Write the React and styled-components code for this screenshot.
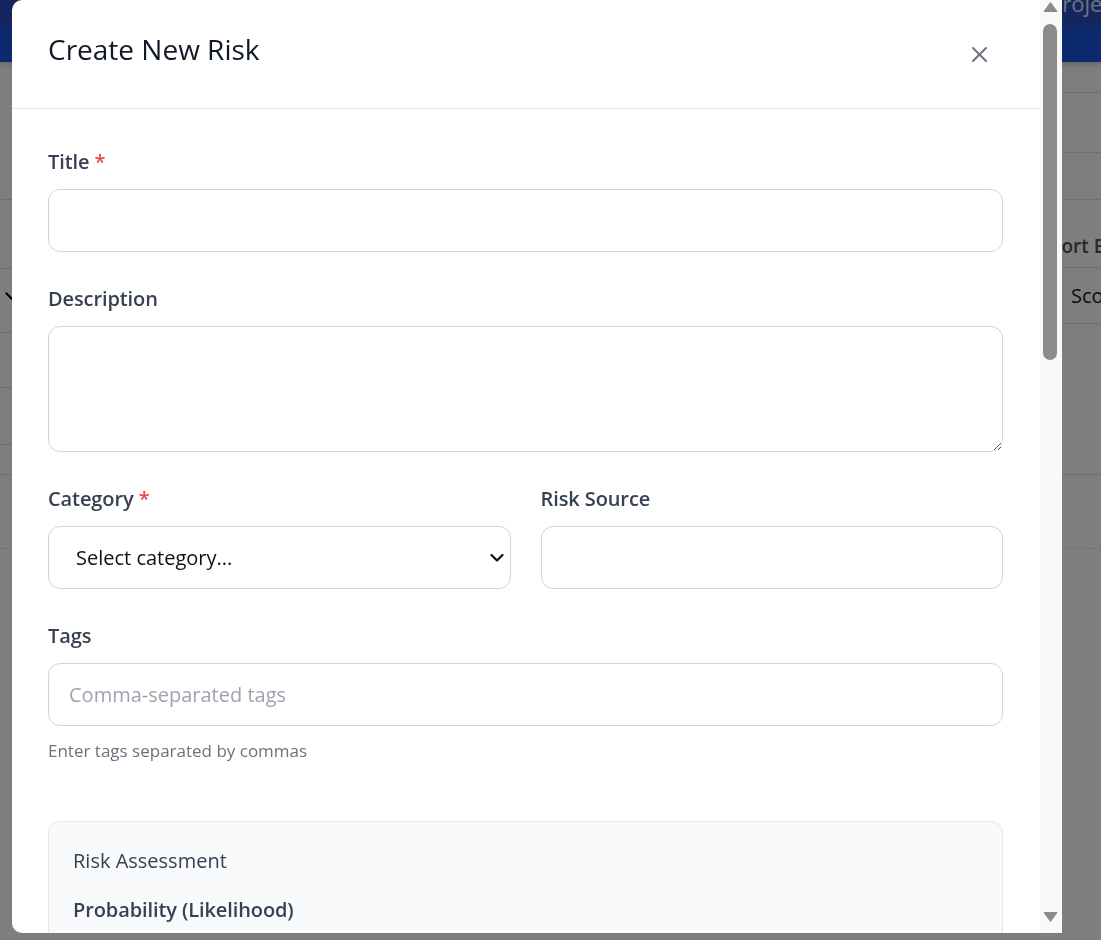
import React from "react";
import styled, { createGlobalStyle, css } from "styled-components";

const GlobalStyle = createGlobalStyle`
    html, body {
        margin: 0;
        padding: 0;
        height: 100%;
        overflow: hidden;
    }

    body {
        font-family: "Open Sans", "Noto Sans", sans-serif;
        background: #fcfcfc;
    }

    * {
        box-sizing: border-box;
    }
`;

/* ---------- dimmed page behind the dialog ---------- */

const Page = styled.div`
    height: 100vh;
    background: #fcfcfc;
`;

const NavBar = styled.nav`
    position: relative;
    z-index: 1;
    box-shadow: 0 2px 6px rgba(0, 0, 0, 0.22);
`;

const NavTop = styled.div`
    display: grid;
    grid-template-columns: 1049px 1fr;
    height: 28px;
    overflow: hidden;
    background: #264cbe;
`;

const NavLink = styled.span`
    margin-top: -8px;
    font-size: 22px;
    line-height: 22px;
    color: rgba(255, 255, 255, 0.88);
    white-space: nowrap;
`;

const NavBottom = styled.div`
    height: 34px;
    background: #1c55dc;
`;

const BgGrid = styled.div`
    display: grid;
    grid-template-columns: 1048px 1fr;
`;

const BgColumn = styled.div`
    display: flex;
    flex-direction: column;
    overflow: hidden;
`;

const BgRow = styled.div`
    display: flex;
    align-items: ${(p) => p.$align || "center"};
    height: ${(p) => p.$h}px;
    padding: ${(p) => p.$pad || "0"};
    border-bottom: 1px ${(p) => (p.$dashed ? "dashed" : "solid")} #dcdcdc;
    white-space: nowrap;
`;

const SortLabel = styled.span`
    font-size: 19px;
    font-weight: 600;
    line-height: 30px;
    color: #4b5563;
`;

const SortValue = styled.span`
    font-size: 20px;
    line-height: 30px;
    color: #111827;
`;

/* ---------- dialog ---------- */

const Overlay = styled.div`
    position: fixed;
    inset: 0;
    z-index: 10;
    display: flex;
    align-items: flex-start;
    padding-left: 12px;
    background: rgba(0, 0, 0, 0.5);
`;

const Dialog = styled.div`
    display: flex;
    width: 1050px;
    height: 933px;
    overflow: hidden;
    background: #ffffff;
    border-radius: 10px 0 0 10px;
`;

const DialogContent = styled.div`
    flex: 1;
    min-width: 0;
    overflow: hidden;
`;

const ScrollRail = styled.div`
    display: flex;
    flex-direction: column;
    width: 22px;
    flex-shrink: 0;
    background: #f9f9f9;
`;

const RailArrow = styled.svg`
    display: block;
    flex-shrink: 0;
`;

const RailTrack = styled.div`
    flex: 1;
`;

const RailThumb = styled.div`
    height: 336px;
    margin: 2px 5px 0 3px;
    border-radius: 7px;
    background: #8b8b8b;
`;

const Header = styled.header`
    display: flex;
    justify-content: space-between;
    align-items: flex-start;
    height: 109px;
    padding: 29px 36px 0;
    border-bottom: 1px solid #e5e7eb;
`;

const Title = styled.h2`
    margin: 0;
    font-size: 28px;
    font-weight: 400;
    line-height: 40px;
    color: #111827;
`;

const CloseButton = styled.button`
    display: flex;
    align-items: center;
    justify-content: center;
    width: 34px;
    height: 34px;
    margin: 8px 8px 0 0;
    padding: 0;
    border: none;
    background: transparent;
    cursor: pointer;
`;

const Body = styled.form`
    padding: 36px 37px 40px 36px;
`;

const Field = styled.div`
    margin-bottom: ${(p) => (p.$mb !== undefined ? p.$mb : 30)}px;
`;

const Row = styled.div`
    display: grid;
    grid-template-columns: 1fr 1fr;
    gap: 30px;
`;

const Label = styled.label`
    display: block;
    margin-bottom: 10px;
    font-size: 20px;
    font-weight: 600;
    line-height: 34px;
    color: #374151;
    letter-spacing: -0.1px;
`;

const Required = styled.span`
    color: #ef4444;
`;

const control = css`
    display: block;
    width: 100%;
    font-family: inherit;
    font-size: 20px;
    color: #111111;
    background: #ffffff;
    border: 1px solid #d1d5db;
    border-radius: 12px;
    outline: none;

    &::placeholder {
        color: #9ca3af;
    }
`;

const Input = styled.input`
    ${control};
    height: 63px;
    padding: 0 20px;
`;

const TextArea = styled.textarea`
    ${control};
    height: 126px;
    padding: 14px 20px;
    resize: vertical;
`;

const SelectWrap = styled.div`
    position: relative;
`;

const Select = styled.select`
    ${control};
    height: 63px;
    padding: 0 40px 0 27px;
    appearance: none;
`;

const Chevron = styled.svg`
    position: absolute;
    top: 50%;
    right: 7px;
    transform: translateY(-50%);
    pointer-events: none;
`;

const Help = styled.p`
    margin: 13px 0 0;
    font-size: 17px;
    line-height: 24px;
    color: #6b7280;
`;

const Panel = styled.fieldset`
    margin: 58px 0 30px;
    padding: 24px;
    background: #f9fafb;
    border: 1px solid #e5e7eb;
    border-radius: 12px;
`;

const PanelTitle = styled.legend`
    float: left;
    width: 100%;
    margin: 0 0 17px;
    padding: 0;
    font-size: 20px;
    font-weight: 400;
    line-height: 30px;
    color: #374151;
`;

const PanelBody = styled.div`
    clear: both;
`;

const ScoreLine = styled.p`
    margin: 0;
    font-size: 18px;
    line-height: 28px;
    color: #374151;
`;

const Footer = styled.div`
    display: flex;
    justify-content: flex-end;
    gap: 16px;
    padding-top: 30px;
    border-top: 1px solid #e5e7eb;
`;

const Button = styled.button`
    height: 50px;
    padding: 0 26px;
    font-family: inherit;
    font-size: 18px;
    font-weight: 600;
    border-radius: 10px;
    cursor: pointer;
    color: ${(p) => (p.$primary ? "#ffffff" : "#374151")};
    background: ${(p) => (p.$primary ? "#2563eb" : "#ffffff")};
    border: 1px solid ${(p) => (p.$primary ? "#2563eb" : "#d1d5db")};
`;

function DownChevron({ color = "#111111" }) {
    return (
        <svg width='14' height='9' viewBox='0 0 14 9' fill='none'>
            <polyline points='1.5,1.5 7,7 12.5,1.5' stroke={color} strokeWidth='2.2' strokeLinecap='round' strokeLinejoin='round' />
        </svg>
    );
}

function SelectBox({ children }) {
    return (
        <SelectWrap>
            <Select defaultValue=''>{children}</Select>
            <Chevron width='14' height='9' viewBox='0 0 14 9' fill='none'>
                <polyline points='1.5,1.5 7,7 12.5,1.5' stroke='#111111' strokeWidth='2.2' strokeLinecap='round' strokeLinejoin='round' />
            </Chevron>
        </SelectWrap>
    );
}

function ScrollBar() {
    return (
        <ScrollRail aria-hidden='true'>
            <RailArrow width='22' height='22' viewBox='0 0 22 22'>
                <polygon points='4,11.5 10.5,2.5 17,11.5' fill='#8b8b8b' stroke='#8b8b8b' strokeWidth='1' strokeLinejoin='round' />
            </RailArrow>
            <RailTrack>
                <RailThumb />
            </RailTrack>
            <RailArrow width='22' height='22' viewBox='0 0 22 22'>
                <polygon points='4,1.5 17,1.5 10.5,10.5' fill='#8b8b8b' stroke='#8b8b8b' strokeWidth='1' strokeLinejoin='round' />
            </RailArrow>
        </ScrollRail>
    );
}

function BackgroundPage() {
    return (
        <Page>
            <NavBar>
                <NavTop>
                    <span />
                    <NavLink>Projects</NavLink>
                </NavTop>
                <NavBottom />
            </NavBar>

            <BgGrid>
                <BgColumn>
                    <BgRow $h={138} />
                    <BgRow $h={69} />
                    <BgRow $h={64} $align='flex-start' $pad='23px 0 0 5px'>
                        <DownChevron color='#000000' />
                    </BgRow>
                    <BgRow $h={55} />
                    <BgRow $h={57} />
                    <BgRow $h={30} />
                    <BgRow $h={74} $dashed />
                </BgColumn>

                <BgColumn>
                    <BgRow $h={31} />
                    <BgRow $h={60} />
                    <BgRow $h={47} />
                    <BgRow $h={68} $align='flex-end' $pad='0 0 6px 3px'>
                        <SortLabel>Sort By</SortLabel>
                    </BgRow>
                    <BgRow $h={56} $pad='0 0 0 23px'>
                        <SortValue>Score</SortValue>
                    </BgRow>
                    <BgRow $h={151} />
                    <BgRow $h={74} $dashed />
                </BgColumn>
            </BgGrid>
        </Page>
    );
}

function RiskDialog() {
    return (
        <Overlay>
            <Dialog role='dialog' aria-label='Create New Risk'>
                <DialogContent>
                    <Header>
                        <Title>Create New Risk</Title>
                        <CloseButton type='button' aria-label='Close'>
                            <svg width='17' height='17' viewBox='0 0 17 17' fill='none'>
                                <path d='M2 2 L15 15 M15 2 L2 15' stroke='#6b7280' strokeWidth='2' strokeLinecap='round' />
                            </svg>
                        </CloseButton>
                    </Header>

                    <Body onSubmit={(e) => e.preventDefault()}>
                        <Field>
                            <Label>
                                Title <Required>*</Required>
                            </Label>
                            <Input type='text' />
                        </Field>

                        <Field>
                            <Label>Description</Label>
                            <TextArea />
                        </Field>

                        <Field>
                            <Row>
                                <div>
                                    <Label>
                                        Category <Required>*</Required>
                                    </Label>
                                    <SelectBox>
                                        <option value=''>Select category...</option>
                                        <option>Technical</option>
                                        <option>Financial</option>
                                        <option>Schedule</option>
                                        <option>Resource</option>
                                    </SelectBox>
                                </div>
                                <div>
                                    <Label>Risk Source</Label>
                                    <Input type='text' />
                                </div>
                            </Row>
                        </Field>

                        <Field $mb={0}>
                            <Label>Tags</Label>
                            <Input type='text' placeholder='Comma-separated tags' />
                            <Help>Enter tags separated by commas</Help>
                        </Field>

                        <Panel>
                            <PanelTitle>Risk Assessment</PanelTitle>
                            <PanelBody>
                                <Field>
                                    <Label>Probability (Likelihood)</Label>
                                    <SelectBox>
                                        <option value=''>Select probability...</option>
                                        <option>1 - Rare</option>
                                        <option>2 - Unlikely</option>
                                        <option>3 - Possible</option>
                                        <option>4 - Likely</option>
                                        <option>5 - Almost certain</option>
                                    </SelectBox>
                                </Field>
                                <Field>
                                    <Label>Impact (Severity)</Label>
                                    <SelectBox>
                                        <option value=''>Select impact...</option>
                                        <option>1 - Negligible</option>
                                        <option>2 - Minor</option>
                                        <option>3 - Moderate</option>
                                        <option>4 - Major</option>
                                        <option>5 - Severe</option>
                                    </SelectBox>
                                </Field>
                                <ScoreLine>Risk Score: —</ScoreLine>
                            </PanelBody>
                        </Panel>

                        <Field>
                            <Label>Mitigation Plan</Label>
                            <TextArea />
                        </Field>

                        <Footer>
                            <Button type='button'>Cancel</Button>
                            <Button type='submit' $primary>
                                Create Risk
                            </Button>
                        </Footer>
                    </Body>
                </DialogContent>
                <ScrollBar />
            </Dialog>
        </Overlay>
    );
}

export default function App() {
    return (
        <>
            <GlobalStyle />
            <BackgroundPage />
            <RiskDialog />
        </>
    );
}
